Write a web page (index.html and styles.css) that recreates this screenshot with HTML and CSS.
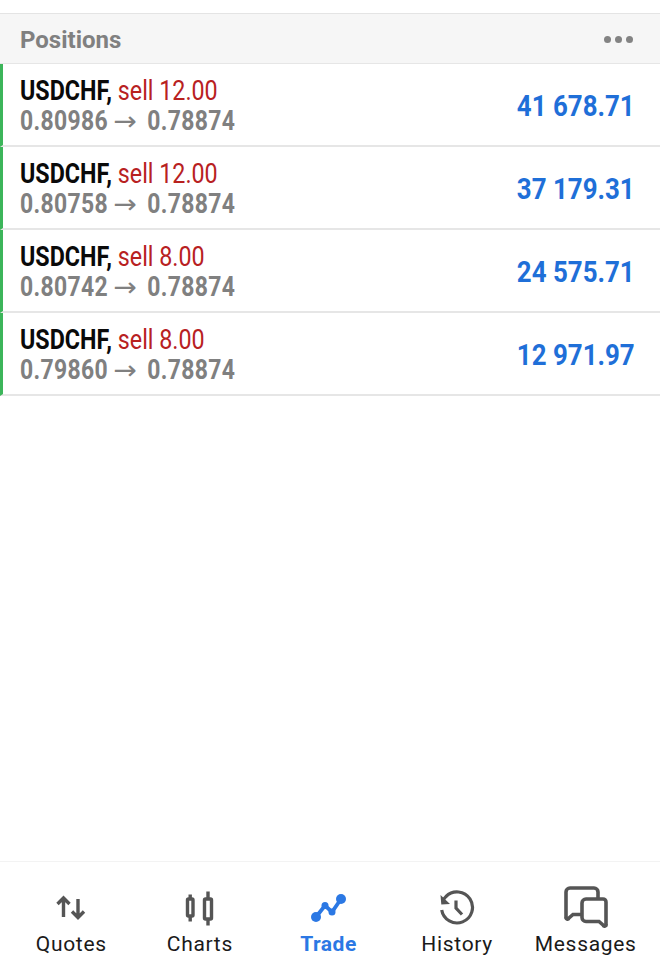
FILE: index.html
```html
<!DOCTYPE html>
<html lang="en">
<head>
<meta charset="utf-8">
<title>Positions</title>
<link rel="stylesheet" href="styles.css">
</head>
<body>
<div class="app">
  <main class="content">
    <header class="head">
      <span class="head-title">Positions</span>
      <span class="dots"><i></i><i></i><i></i></span>
    </header>
    <div class="row">
      <div class="info">
        <div class="line1"><b>USDCHF,</b> <span class="sell">sell 12.00</span></div>
        <div class="line2">0.80986 <span class="arrow">→</span> 0.78874</div>
      </div>
      <div class="profit">41 678.71</div>
    </div>
    <div class="row">
      <div class="info">
        <div class="line1"><b>USDCHF,</b> <span class="sell">sell 12.00</span></div>
        <div class="line2">0.80758 <span class="arrow">→</span> 0.78874</div>
      </div>
      <div class="profit">37 179.31</div>
    </div>
    <div class="row">
      <div class="info">
        <div class="line1"><b>USDCHF,</b> <span class="sell">sell 8.00</span></div>
        <div class="line2">0.80742 <span class="arrow">→</span> 0.78874</div>
      </div>
      <div class="profit">24 575.71</div>
    </div>
    <div class="row">
      <div class="info">
        <div class="line1"><b>USDCHF,</b> <span class="sell">sell 8.00</span></div>
        <div class="line2">0.79860 <span class="arrow">→</span> 0.78874</div>
      </div>
      <div class="profit">12 971.97</div>
    </div>
  </main>
  <nav class="tabs">
    <div class="tab">
      <svg class="ico" viewBox="0 0 36 36"><path d="M10.500 27V9M4.500 14 10.500 8l6 6M25 9v18M19 21.500l6 6 6-6" fill="none" stroke="#555" stroke-width="3.400"/></svg>
      <span>Quotes</span>
    </div>
    <div class="tab">
      <svg class="ico" viewBox="0 0 36 36"><g fill="none" stroke="#555" stroke-width="3.400"><rect x="5.500" y="9" width="5.500" height="17" rx="1"/><rect x="22.500" y="9" width="7" height="20" rx="1"/><path d="M8.200 4.500V9M8.200 26v5.500M26 1.500V9M26 29v6.500"/></g></svg>
      <span>Charts</span>
    </div>
    <div class="tab active">
      <svg class="ico" viewBox="0 0 36 36"><path d="M6 27 15 15.500l7 6.500L31 9" fill="none" stroke="#2b78e4" stroke-width="3.800"/><circle cx="6" cy="27" r="5" fill="#2b78e4"/><circle cx="15" cy="15.500" r="3.500" fill="#2b78e4"/><circle cx="22" cy="22" r="3.500" fill="#2b78e4"/><circle cx="31" cy="9" r="5" fill="#2b78e4"/></svg>
      <span>Trade</span>
    </div>
    <div class="tab">
      <svg class="ico" viewBox="0 0 36 36"><path d="M2.700 20A15.500 15.500 0 1 0 7 6.500L3.500 10.500" fill="none" stroke="#555" stroke-width="3.200"/><path d="M1.500 5 2.300 14.500l8.700-.500z" fill="#555"/><path d="M17 10.500v7.500l6 6.500" fill="none" stroke="#555" stroke-width="3.200"/></svg>
      <span>History</span>
    </div>
    <div class="tab">
      <svg class="ico ico-msg" viewBox="0 0 44 42"><path d="M18 28.500H9l-4 3.500a1.500 1.500 0 0 1-3-1V6a4 4 0 0 1 4-4h24a4 4 0 0 1 4 4v6" fill="none" stroke="#555" stroke-width="3.600"/><path d="M22 13h17a3 3 0 0 1 3 3v22a1.500 1.500 0 0 1-3 1l-4-3.500H22a4 4 0 0 1-4-4V17a4 4 0 0 1 4-4z" fill="none" stroke="#555" stroke-width="3.600"/></svg>
      <span>Messages</span>
    </div>
  </nav>
</div>
</body>
</html>
```
FILE: styles.css
```css
* { box-sizing: border-box; }
html, body { margin: 0; padding: 0; background: #fff; }
body { font-family: Roboto, "Liberation Sans", sans-serif; }
.app { width: 660px; height: 967px; display: flex; flex-direction: column; padding-top: 13px; }
.content { flex: 1; }
.head {
  height: 51px;
  background: #f6f6f6;
  border-top: 1px solid #e4e4e4;
  border-bottom: 1px solid #e6e6e6;
  display: flex;
  align-items: center;
  justify-content: space-between;
  padding: 3px 27px 0 20px;
}
.head-title { font-size: 24px; font-weight: 700; color: #808080; }
.dots { display: flex; gap: 4px; margin-top: -2px; }
.dots i { width: 7px; height: 7px; border-radius: 50%; background: #838383; }
.row {
  height: 83px;
  border-left: 3px solid #3cb55a;
  border-bottom: 2px solid #e6e6e6;
  display: flex;
  align-items: center;
  justify-content: space-between;
  padding: 2px 25px 0 17px;
}
.info { line-height: 30px; font-size: 27px; white-space: nowrap; }
.line1, .line2 { transform-origin: left center; }
.line1 { transform: scaleX(0.862); }
.line2 { transform: scaleX(0.85); }
.line1 b { font-weight: 700; color: #0a0a0a; }
.sell { color: #b8211f; font-weight: 400; }
.line2 { font-weight: 700; color: #808080; letter-spacing: 0.4px; }
.arrow { display: inline-block; line-height: 0; margin: 0 7.5px 0 2.5px; font-size: 26px; font-family: "DejaVu Sans", sans-serif; font-weight: 400; letter-spacing: 0; transform: scaleX(1.27); }
.profit { font-size: 30px; font-weight: 700; color: #1f6fd8; white-space: nowrap; transform-origin: right center; transform: scaleX(0.862); }
.tabs {
  height: 106px;
  border-top: 1px solid #f3f3f3;
  display: grid;
  grid-template-columns: repeat(5, 1fr);
  padding: 0 10px 10px 7px;
}
.tab {
  display: flex;
  flex-direction: column;
  align-items: center;
  justify-content: flex-end;
  font-size: 21px;
  letter-spacing: 0.7px;
  color: #1a1a1a;
  line-height: 26px;
  gap: 5px;
}
.tab.active { color: #2b78e4; font-weight: 700; letter-spacing: 0.5px; }
.ico { width: 36px; height: 36px; }
.ico-msg { width: 44px; height: 42px; margin-bottom: -2px; }
```
